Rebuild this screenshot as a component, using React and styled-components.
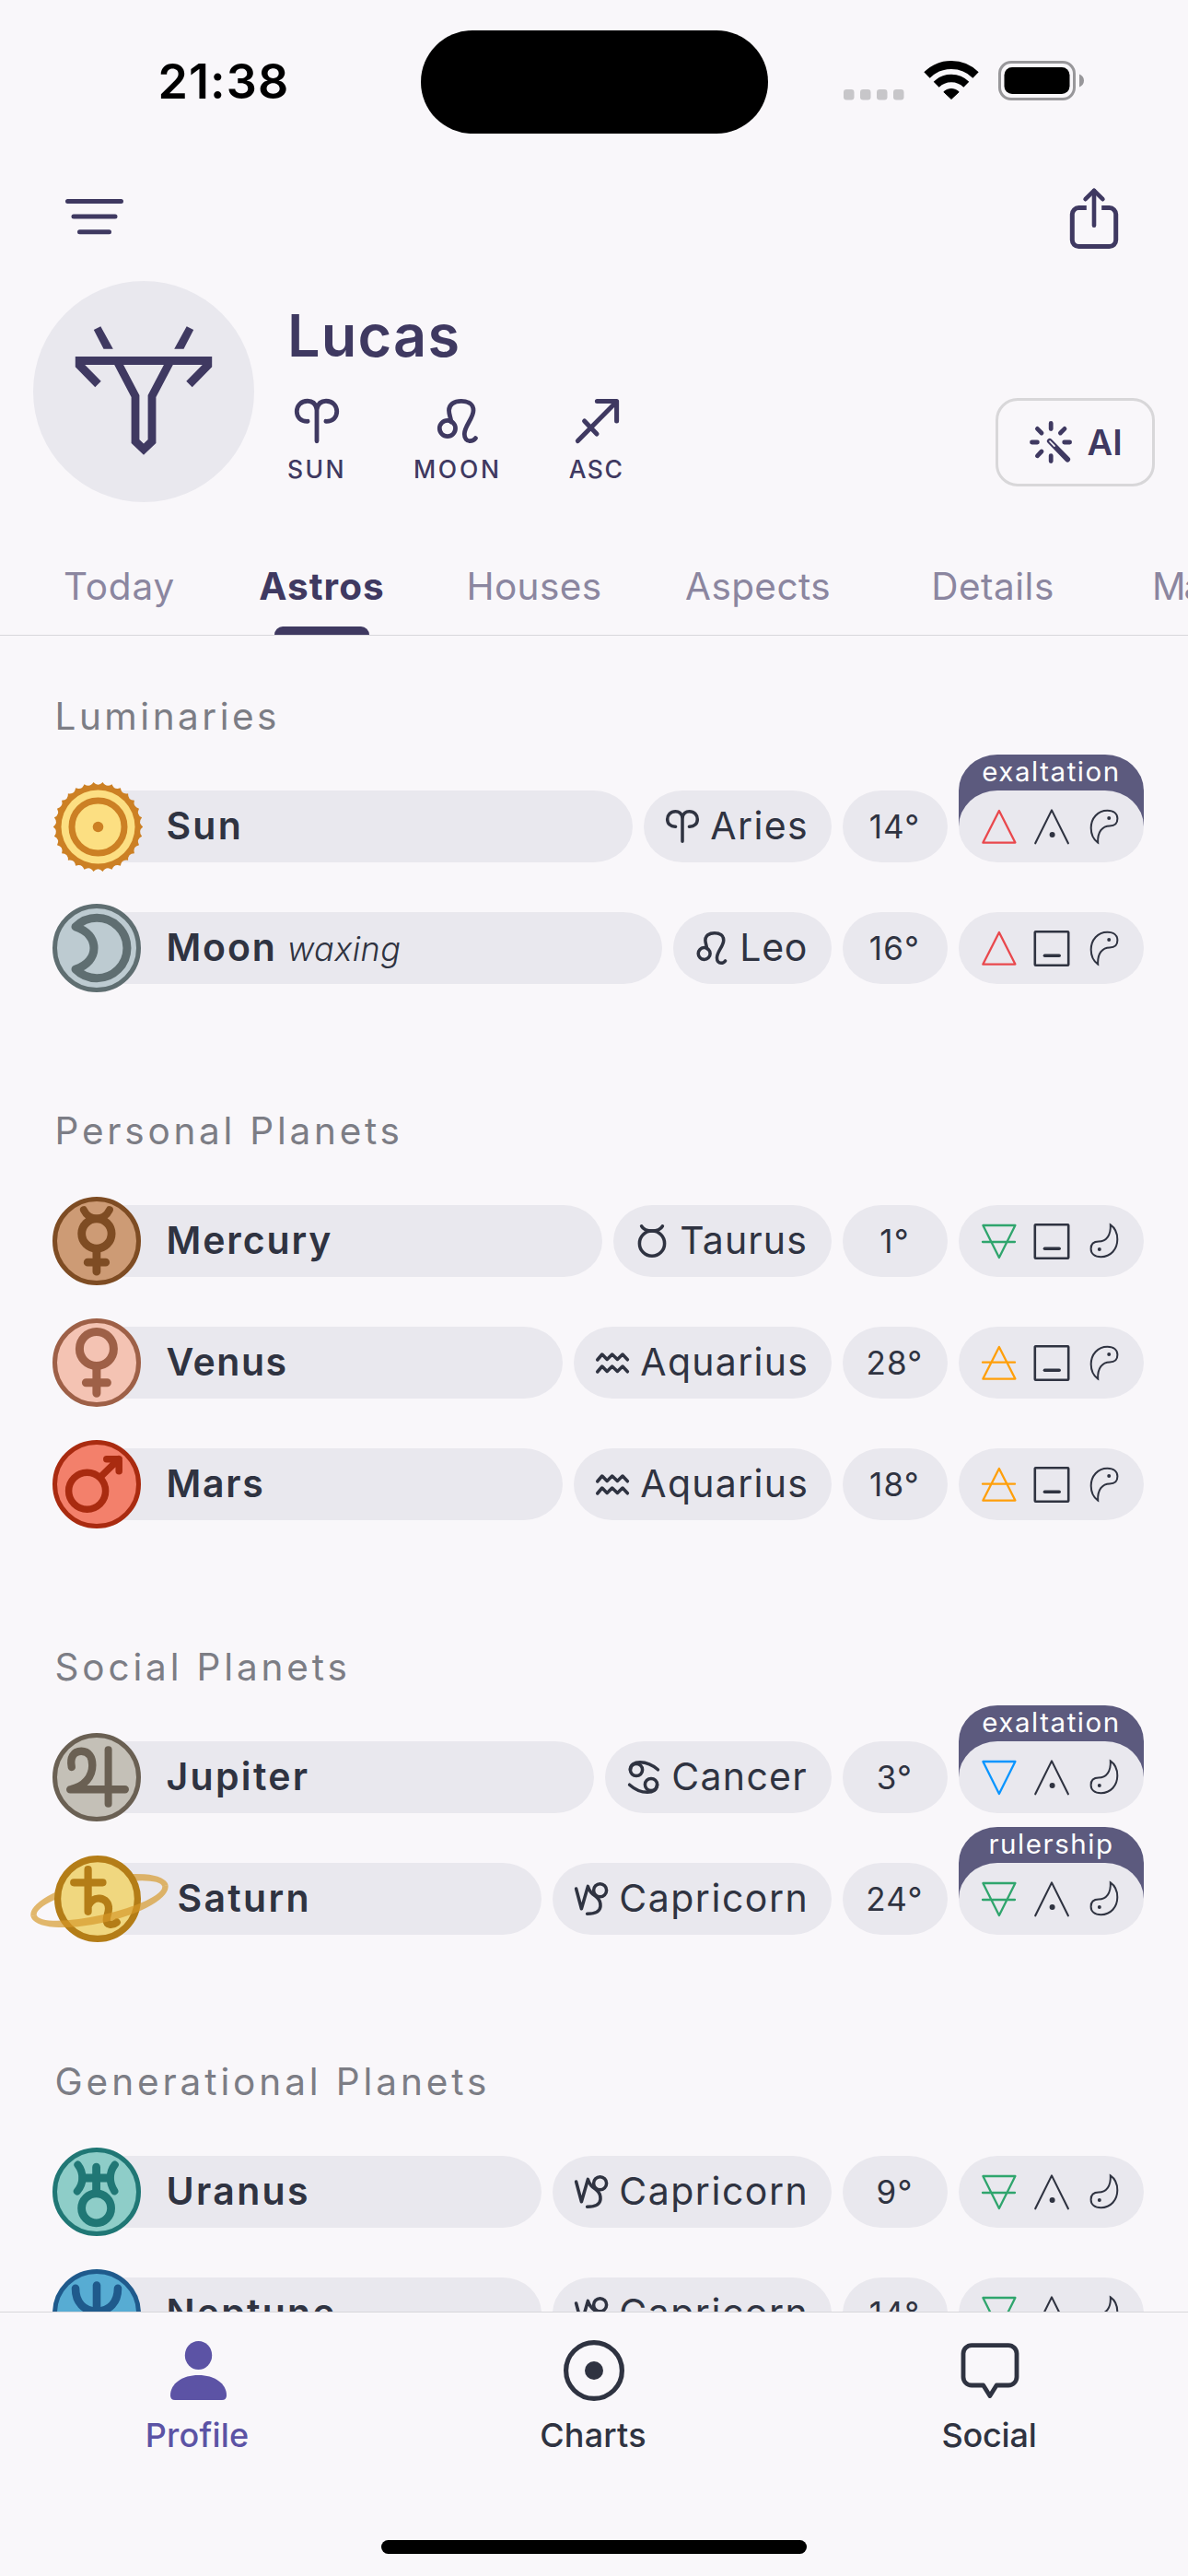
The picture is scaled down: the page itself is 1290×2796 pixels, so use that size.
import React from 'react';
import styled, { createGlobalStyle } from 'styled-components';

const color = {
  page: '#f9f7fa',
  pill: '#e9e8ee',
  brand: '#3f3961',
  ink: '#2f3341',
  muted: '#8b86a0',
  heading: '#7c7d85',
  line: '#d8d7db',
  badge: '#5c5a7e',
  active: '#5c53a5',
};

const GlobalStyle = createGlobalStyle`
  * { box-sizing: border-box; }
  html, body { margin: 0; padding: 0; background: ${color.page}; }
  body { font-family: Inter, "Liberation Sans", sans-serif; }
  svg { display: block; flex: none; overflow: visible; }
`;

const Screen = styled.div`
  width: 1290px;
  height: 2796px;
  display: flex;
  flex-direction: column;
  overflow: hidden;
  background: ${color.page};
  color: ${color.ink};
`;

/* ---------- status bar ---------- */

const StatusBar = styled.div`
  flex: none;
  height: 145px;
  padding-top: 33px;
  display: grid;
  grid-template-columns: 456.5px 377px 1fr;
  align-items: center;
`;

const Clock = styled.div`
  padding-left: 171.5px;
  font-size: 52px;
  font-weight: 600;
  letter-spacing: 1.1px;
  line-height: 60px;
  color: #000;
`;

const Island = styled.div`
  height: 112px;
  border-radius: 56px;
  background: #000;
`;

const StatusIcons = styled.div`
  display: flex;
  align-items: center;
  padding-left: 82.5px;
  padding-bottom: 4px;
`;

const WifiSlot = styled.div`
  margin: 0 22.5px 0 21.5px;
`;

function StatusBarRow() {
  return (
    <StatusBar>
      <Clock>21:38</Clock>
      <Island />
      <StatusIcons>
        <svg width="66" height="43" viewBox="0 0 66 43" fill="#c7c6c9">
          {[0, 18, 36, 54].map((x) => (
            <rect key={x} x={x} y="31" width="11.5" height="11.5" rx="3.2" />
          ))}
        </svg>
        <WifiSlot>
          <svg width="58" height="43" viewBox="0 0 58 43" fill="none" stroke="#000">
            <path d="M2.5 15.5A37.5 37.5 0 0 1 55.5 15.5" strokeWidth="9" />
            <path d="M12.7 25.7A23 23 0 0 1 45.3 25.7" strokeWidth="8.4" />
            <path d="M29 41.5L20.8 33.8A11.8 11.8 0 0 1 37.2 33.8Z" fill="#000" strokeWidth="1" strokeLinejoin="round" />
          </svg>
        </WifiSlot>
        <svg width="94" height="43" viewBox="0 0 94 43">
          <rect x="1.5" y="1.5" width="81" height="40" rx="12.5" fill="none" stroke="#98979a" strokeWidth="3" />
          <rect x="6.5" y="7" width="71" height="29" rx="8.5" fill="#000" />
          <path d="M88 14.5C91.2 15.8 93 18.4 93 21.5C93 24.6 91.2 27.2 88 28.5Z" fill="#98979a" />
        </svg>
      </StatusIcons>
    </StatusBar>
  );
}

/* ---------- toolbar ---------- */

const Toolbar = styled.div`
  flex: none;
  height: 160px;
  padding: 20px 75px 0 71px;
  display: flex;
  align-items: center;
  justify-content: space-between;
`;

function ToolbarRow() {
  return (
    <Toolbar>
      <svg width="63" height="38" viewBox="0 0 63 38" stroke={color.brand} strokeWidth="5" strokeLinecap="round">
        <path d="M2.5 2.4H60.5M9 19.1H54M15.5 35.8H47.5" />
      </svg>
      <svg width="54" height="76" viewBox="0 0 54 76" fill="none" stroke={color.brand} strokeWidth="5" strokeLinecap="round" strokeLinejoin="round">
        <path d="M18.8 28.6H10.3a7 7 0 0 0-7 7V63.6a7 7 0 0 0 7 7H43.7a7 7 0 0 0 7-7V35.6a7 7 0 0 0-7-7H35.2" strokeLinecap="butt" />
        <path d="M27 10V47.8" strokeWidth="4.6" />
        <path d="M17.6 19.2L27 9.8L36.4 19.2" strokeWidth="4.6" />
      </svg>
    </Toolbar>
  );
}

/* ---------- sign glyphs ---------- */

const signs = {
  aries: {
    box: 36,
    art: (
      <>
        <path d="M18 34.3V8C17 3.8 14 1.7 10.5 1.7C5 1.7 1.7 5.5 1.7 10.2C1.7 15 5 18.4 10.6 18.2" />
        <path d="M18 8C19 3.8 22 1.7 25.5 1.7C31 1.7 34.3 5.5 34.3 10.2C34.3 15 31 18.4 25.4 18.2" />
      </>
    ),
  },
  leo: {
    box: 48,
    art: (
      <>
        <circle cx="12.9" cy="32" r="8.6" />
        <path d="M17 25C16 19.5 14.5 16 14.5 12.5C14.5 6 20 2.3 27.8 2.3C35.8 2.3 41 6 41 12.5C41 21 31.3 29.5 31.3 38C31.3 43 34 45.7 37.3 45.7C40.3 45.7 42 44.6 43.4 42.6" />
      </>
    ),
  },
  sagittarius: {
    box: 48,
    art: <path d="M3.4 45.6L45 3.4M24.4 2.6H45.6V24M10.6 24L24 38" />,
  },
  taurus: {
    box: 36,
    art: (
      <>
        <circle cx="18" cy="20.7" r="13.6" />
        <path d="M6.6 1.9C8.5 5.4 13 7.1 18 7.1C23 7.1 27.5 5.4 29.4 1.9" />
      </>
    ),
  },
  aquarius: {
    box: 36,
    art: (
      <>
        <path d="M1.7 15L6.8 9L12.2 14.5L17.7 9L23.4 14.5L29 9L34.4 14.8" />
        <path d="M1.7 28L6.8 22L12.2 27.5L17.7 22L23.4 27.5L29 22L34.4 27.8" />
      </>
    ),
  },
  cancer: {
    box: 36,
    art: (
      <>
        <circle cx="10" cy="10" r="6.6" />
        <circle cx="26" cy="26" r="6.6" />
        <path d="M3.4 10C3.4 4.3 8 1.7 14 1.7C22 1.7 28 5 33.4 9.8" />
        <path d="M32.6 26C32.6 31.7 28 34.3 22 34.3C14 34.3 8 31 2.6 26.2" />
      </>
    ),
  },
  capricorn: {
    box: 36,
    art: (
      <>
        <circle cx="27.6" cy="8.7" r="7" />
        <path d="M1.6 7L7.4 28.8L14.4 4.4C16.5 11.5 20 13.5 23.4 15.8C27.2 18.6 28.2 22 28 26C27.6 32 23 34.3 13.6 34.3" />
      </>
    ),
  },
};

function SignGlyph({ name, size = 36, weight = 0.098 }) {
  const { box, art } = signs[name];
  return (
    <svg width={size} height={size} viewBox={`0 0 ${box} ${box}`} fill="none" stroke="currentColor" strokeWidth={box * weight} strokeLinecap="round" strokeLinejoin="round">
      {art}
    </svg>
  );
}

/* ---------- profile header ---------- */

const ProfileHeader = styled.header`
  flex: none;
  height: 240px;
  padding: 0 36px;
  display: flex;
  align-items: flex-start;
  color: ${color.brand};
`;

const Avatar = styled.div`
  width: 240px;
  height: 240px;
  border-radius: 50%;
  background: ${color.pill};
`;

const Identity = styled.div`
  margin-left: 36px;
  padding-top: 19px;
  display: flex;
  flex-direction: column;
`;

const ProfileName = styled.h1`
  margin: 0;
  font-size: 63px;
  font-weight: 600;
  line-height: 80px;
  letter-spacing: 1.2px;
`;

const BigThree = styled.div`
  margin-top: 29px;
  display: flex;
  gap: 73px;
`;

const Placement = styled.div`
  display: flex;
  flex-direction: column;
  align-items: center;
  gap: 12px;
`;

const PlacementLabel = styled.span`
  font-size: 26.5px;
  font-weight: 500;
  line-height: 32px;
  letter-spacing: ${(p) => p.$track}px;
`;

const AiButton = styled.button`
  margin: 127px 0 0 auto;
  width: 173px;
  height: 96px;
  padding: 0 0 0 33.5px;
  display: flex;
  align-items: center;
  gap: 17px;
  border: 3px solid #d8d7d9;
  border-radius: 24px;
  background: transparent;
  color: ${color.brand};
  font-family: inherit;
  font-size: 38px;
  font-weight: 600;
  line-height: 48px;
`;

function Header() {
  return (
    <ProfileHeader>
      <Avatar>
        <svg width="240" height="240" viewBox="36 305 240 240" fill="none" stroke={color.brand} strokeWidth="9">
          <path d="M106.5 417L86.3 396.3V391.5H225.7V396.3L205.5 417" />
          <path d="M126.5 391L147 430V479L156 487.6L165 479V430L185.5 391" strokeWidth="8.8" />
          <path d="M101.8 358L109.3 354.2L122.8 378.7H112.5ZM210.2 358L202.7 354.2L189.2 378.7H199.5Z" fill={color.brand} stroke="none" />
        </svg>
      </Avatar>
      <Identity>
        <ProfileName>Lucas</ProfileName>
        <BigThree>
          <Placement>
            <SignGlyph name="aries" size={48} weight={0.1} />
            <PlacementLabel $track={2.4}>SUN</PlacementLabel>
          </Placement>
          <Placement>
            <SignGlyph name="leo" size={48} weight={0.1} />
            <PlacementLabel $track={2.7}>MOON</PlacementLabel>
          </Placement>
          <Placement>
            <SignGlyph name="sagittarius" size={48} weight={0.105} />
            <PlacementLabel $track={1.5}>ASC</PlacementLabel>
          </Placement>
        </BigThree>
      </Identity>
      <AiButton>
        <svg width="46" height="46" viewBox="0 0 46 46" fill="none" stroke={color.brand} strokeWidth="4.8" strokeLinecap="round">
          <path d="M23.2 2.5V8.6M23.2 37.6V43.6M2.5 23H8.4M37.7 23H43.6M8.4 8.4L13 13M38 8.4L33.4 13M8.4 37.8L13 33" />
          <path d="M21.8 21.8L41.2 41.6" strokeWidth="5.8" />
          <path d="M22 22L27 27.2" stroke={color.page} strokeWidth="1.7" />
        </svg>
        AI
      </AiButton>
    </ProfileHeader>
  );
}

/* ---------- tabs ---------- */

const TabBar = styled.nav`
  flex: none;
  height: 145px;
  padding-left: 24px;
  display: flex;
  overflow: hidden;
  border-bottom: 1px solid ${color.line};
`;

const Tab = styled.div`
  flex: none;
  position: relative;
  width: ${(p) => p.$width}px;
  padding-top: 67px;
  text-align: ${(p) => p.$align || 'center'};
  padding-left: ${(p) => (p.$align ? 45 : 0)}px;
  font-size: 40.5px;
  font-weight: ${(p) => (p.$active ? 700 : 400)};
  line-height: 50px;
  letter-spacing: ${(p) => p.$track}px;
  white-space: nowrap;
  color: ${(p) => (p.$active ? color.brand : color.muted)};
`;

const TabIndicator = styled.span`
  position: absolute;
  left: 50%;
  bottom: 0;
  width: 103px;
  height: 9px;
  margin-left: -51.5px;
  border-radius: 9px 9px 0 0;
  background: ${color.brand};
`;

const tabs = [
  { label: 'Today', width: 211, track: 0.8 },
  { label: 'Astros', width: 229, track: 1, active: true },
  { label: 'Houses', width: 232, track: 0.4 },
  { label: 'Aspects', width: 254, track: 0.4 },
  { label: 'Details', width: 256, track: 0.5 },
  { label: 'Maps', width: 200, track: -2, align: 'left' },
];

/* ---------- astro list ---------- */

const List = styled.main`
  flex: 1;
  min-height: 0;
  overflow: hidden;
  padding: 63px 48px 0 57px;
`;

const Section = styled.section`
  margin-bottom: 135px;
`;

const SectionTitle = styled.h2`
  margin: 0 0 55px 2.5px;
  font-size: 40.5px;
  font-weight: 400;
  line-height: 50px;
  letter-spacing: ${(p) => p.$track}px;
  color: ${color.heading};
`;

const Rows = styled.div`
  display: flex;
  flex-direction: column;
  gap: 54px;
`;

const Row = styled.div`
  display: flex;
  gap: 12px;
  height: 78px;
`;

const Planet = styled.div`
  z-index: 1;
  flex: none;
  width: 96px;
  height: 96px;
  margin: -9px -60px -9px 0;
`;

const Pill = styled.div`
  display: flex;
  align-items: center;
  height: 78px;
  border-radius: 42px / 39px;
  background: ${color.pill};
`;

const NamePill = styled(Pill)`
  flex: 1;
  align-items: baseline;
  padding: 13px 0 0 ${(p) => (p.$ringed ? 87.5 : 75.5)}px;
  border-radius: 0 42px 42px 0 / 0 39px 39px 0;
  line-height: 50px;
`;

const PlanetName = styled.span`
  font-size: 41px;
  font-weight: 600;
  letter-spacing: ${(p) => p.$track}px;
`;

const Phase = styled.span`
  margin-left: 11.5px;
  font-size: 36px;
  font-style: italic;
  font-weight: 300;
  letter-spacing: 0.4px;
`;

const SignPill = styled(Pill)`
  width: ${(p) => p.$width}px;
  padding-left: 24px;
  gap: 12.3px;
`;

const SignName = styled.span`
  padding-bottom: 2px;
  font-size: 41px;
  line-height: 50px;
  letter-spacing: ${(p) => p.$track}px;
`;

const DegreePill = styled(Pill)`
  width: 114px;
  justify-content: center;
  padding-right: 1px;
  font-size: 35px;
  line-height: 44px;
  letter-spacing: 1.2px;
`;

const QualitySlot = styled.div`
  position: relative;
  width: 201px;
`;

const QualityPill = styled(Pill)`
  position: relative;
  padding: 0 24.5px;
  gap: 19px;
`;

const DignityBadge = styled.div`
  position: absolute;
  left: 0;
  right: 0;
  top: -39px;
  height: 78px;
  border-radius: 42px 42px 0 0 / 39px 39px 0 0;
  background: ${color.badge};
  color: #fff;
  font-size: 29.5px;
  line-height: 37px;
  letter-spacing: 1.55px;
  text-align: center;
`;

/* ---------- element, modality and polarity marks ---------- */

const elements = {
  fire: { stroke: '#e9484d', d: 'M1.4 36.6H36.4L18.9 2Z' },
  earth: { stroke: '#2fa56d', d: 'M1.4 2H36.4L18.9 37ZM1 20H36' },
  air: { stroke: '#ff9f0a', d: 'M1.4 36.6H36.4L18.9 2ZM1 18.7H36' },
  water: { stroke: '#0a95ff', d: 'M1.4 2H36.4L18.9 37Z' },
};

function ElementMark({ kind }) {
  const { stroke, d } = elements[kind];
  return (
    <svg width="38" height="38" viewBox="0 0 38 38" fill="none" stroke={stroke} strokeWidth="2.3" strokeLinecap="round" strokeLinejoin="round">
      <path d={d} />
    </svg>
  );
}

function ModalityMark({ fixed }) {
  return (
    <svg width="38" height="38" viewBox="0 0 38 38" fill="none" stroke={color.ink} strokeLinecap="round" strokeLinejoin="round">
      {fixed ? (
        <>
          <rect x="0.8" y="1.3" width="36.4" height="36.4" rx="0.8" strokeWidth="2.6" />
          <path d="M11.4 27.2H27.2" strokeWidth="3.5" />
        </>
      ) : (
        <>
          <path d="M1.2 37.3L19 1.4L36.9 37.3" strokeWidth="2.1" />
          <circle cx="19.6" cy="28" r="3" fill={color.ink} stroke="none" />
        </>
      )}
    </svg>
  );
}

function PolarityMark({ yin }) {
  return (
    <svg width="38" height="38" viewBox="0 0 38 38" fill="none" stroke={color.ink} strokeWidth="2">
      <g transform={yin ? 'rotate(180 19 19)' : undefined}>
        <path d="M12.2 36.6C7 33 4.7 27.3 4.7 20.8C4.7 10 12 1.8 22.5 1.8C29.6 1.8 33.4 5.5 33.4 10.5C33.4 15.6 30.5 18.4 25 18.4C17 18.4 11.5 25 12.2 36.6Z" />
        <circle cx="24.2" cy="10" r="2" fill={color.ink} stroke="none" />
      </g>
    </svg>
  );
}

/* ---------- planet medallions ---------- */

function sunEdge(cx, cy) {
  const at = (deg, r) => {
    const a = (deg * Math.PI) / 180;
    return `${(cx + r * Math.cos(a)).toFixed(2)} ${(cy + r * Math.sin(a)).toFixed(2)}`;
  };
  let d = `M${at(180, 48.7)}`;
  for (let i = 0; i < 30; i += 1) {
    d += `Q${at(186 + i * 12, 43.2)} ${at(192 + i * 12, 48.7)}`;
  }
  return `${d}Z`;
}

function Disc({ fill, stroke, children, width = 8.7 }) {
  return (
    <svg width="96" height="96" viewBox="0 0 96 96" fill="none" stroke={stroke} strokeWidth={width} strokeLinecap="round" strokeLinejoin="round">
      <circle cx="48" cy="48" r="45.5" fill={fill} strokeWidth="5" />
      {children}
    </svg>
  );
}

const planetArt = {
  Sun: (
    <svg width="96" height="96" viewBox="0 0 96 96" fill="none" stroke="#cc8024">
      <path d={sunEdge(49.5, 48.5)} fill="#cc8024" stroke="none" />
      <circle cx="49.5" cy="48.5" r="40" fill="#fcdf82" stroke="none" />
      <circle cx="49.5" cy="48.5" r="28.5" strokeWidth="7" />
      <circle cx="49.5" cy="48.5" r="5.8" fill="#cc8024" stroke="none" />
    </svg>
  ),
  Moon: (
    <Disc fill="#bdcbd1" stroke="#5f6e71" width={9}>
      <path d="M25 25A32.7 32.7 0 1 1 25 71C38 67 45 58 45 48C45 38 38 29 25 25Z" />
    </Disc>
  ),
  Mercury: (
    <Disc fill="#cd9b75" stroke="#7e4c23" width={8.8}>
      <circle cx="47.9" cy="40" r="16.2" />
      <path d="M33.9 14.2C37 20.5 41.5 23.4 47.9 23.4C54.3 23.4 58.8 20.5 61.9 14.2" strokeWidth="8" />
      <path d="M47.9 57V81.2M38.2 71.2H57.7" />
    </Disc>
  ),
  Venus: (
    <Disc fill="#f4c3b3" stroke="#9e6047" width={9}>
      <circle cx="47.9" cy="33" r="18.5" />
      <path d="M47.9 52V81.2M36.4 69.7H59.4" />
    </Disc>
  ),
  Mars: (
    <Disc fill="#f3806b" stroke="#a92b10" width={7.5}>
      <circle cx="37.6" cy="55.2" r="20" />
      <path d="M52.8 39.4L72 20.8M58.8 20.7H72.2V33.8" />
    </Disc>
  ),
  Jupiter: (
    <Disc fill="#c4c0b7" stroke="#6a6053" width={8.4}>
      <path d="M20.8 37C18.8 27 22.5 19.8 31.3 19.8C39.5 19.8 43.3 26.5 43.3 35C43.3 47 35 58.5 19.2 61.3H78.8" />
      <path d="M60.6 18.3V76.7" strokeWidth="8" />
    </Disc>
  ),
  Saturn: (
    <svg width="96" height="96" viewBox="0 0 96 96" fill="none" stroke="#b47d17" strokeWidth="8.2" strokeLinecap="round">
      <g transform="translate(51 50) rotate(-12.8)" fill="#d69828" fillOpacity="0.68" stroke="none">
        <path d="M-76.4 0A76.4 24.2 0 0 1 76.4 0H69.9A69.9 15.7 0 0 0 -69.9 0Z" />
      </g>
      <circle cx="49" cy="48" r="43.4" fill="#f0d77f" strokeWidth="7.2" />
      <path d="M38.6 16.2V61.8M23.2 30.3H54.5M38.8 55.5C42 49.5 46.5 47 51.5 47.6C57.5 48.4 61 52.5 61 58.5C61 63.5 58.7 66.5 58.7 71C58.7 76.6 64.5 77.5 69.8 73.4" />
      <g transform="translate(51 50) rotate(-12.8)" fill="#d69828" fillOpacity="0.68" stroke="none">
        <path d="M-76.4 0A76.4 24.2 0 0 0 76.4 0H69.9A69.9 15.7 0 0 1 -69.9 0Z" />
      </g>
    </svg>
  ),
  Uranus: (
    <Disc fill="#8ecdc8" stroke="#207775" width={8.8}>
      <circle cx="47.6" cy="65.8" r="16" />
      <path d="M47.6 21.2V49M33 33H62" />
      <path d="M27.5 18.6C31 23 32.4 28 32.4 33C32.4 38 30.6 43 26.9 47.3M67.7 18.6C64.2 23 62.8 28 62.8 33C62.8 38 64.6 43 67.3 47.3" strokeWidth="8.2" />
    </Disc>
  ),
  Neptune: (
    <Disc fill="#57acd3" stroke="#1f5a8c" width={8.6}>
      <path d="M25 20.8C25 36 34 45.5 48 45.5C62 45.5 71 36 71 20.8M48 17.6V82M37 66H59" />
    </Disc>
  ),
};

const sections = [
  {
    title: 'Luminaries',
    track: 3.5,
    rows: [
      { name: 'Sun', track: 2.2, sign: 'Aries', signTrack: 1.4, width: 204, degree: 14, element: 'fire', badge: 'exaltation' },
      { name: 'Moon', track: 1.8, phase: 'waxing', sign: 'Leo', signTrack: 0.7, width: 172, degree: 16, element: 'fire', fixed: true },
    ],
  },
  {
    title: 'Personal Planets',
    track: 3.75,
    rows: [
      { name: 'Mercury', track: 1.9, sign: 'Taurus', signTrack: 1.1, width: 237, degree: 1, element: 'earth', fixed: true, yin: true },
      { name: 'Venus', track: 1.53, sign: 'Aquarius', signTrack: 1.3, width: 280, degree: 28, element: 'air', fixed: true },
      { name: 'Mars', track: 1.7, sign: 'Aquarius', signTrack: 1.3, width: 280, degree: 18, element: 'air', fixed: true },
    ],
  },
  {
    title: 'Social Planets',
    track: 3.85,
    rows: [
      { name: 'Jupiter', track: 2.3, sign: 'Cancer', signTrack: 1.3, width: 246, degree: 3, element: 'water', yin: true, badge: 'exaltation' },
      { name: 'Saturn', track: 2.3, ringed: true, sign: 'Capricorn', signTrack: 1.5, width: 303, degree: 24, element: 'earth', yin: true, badge: 'rulership' },
    ],
  },
  {
    title: 'Generational Planets',
    track: 3.9,
    rows: [
      { name: 'Uranus', track: 2.35, sign: 'Capricorn', signTrack: 1.5, width: 303, degree: 9, element: 'earth', yin: true },
      { name: 'Neptune', track: 2.2, sign: 'Capricorn', signTrack: 1.5, width: 303, degree: 14, element: 'earth', yin: true },
    ],
  },
];

function AstroRow({ item }) {
  return (
    <Row>
      <Planet>{planetArt[item.name]}</Planet>
      <NamePill $ringed={item.ringed}>
        <PlanetName $track={item.track}>{item.name}</PlanetName>
        {item.phase && <Phase>{item.phase}</Phase>}
      </NamePill>
      <SignPill $width={item.width}>
        <SignGlyph name={item.sign.toLowerCase()} />
        <SignName $track={item.signTrack}>{item.sign}</SignName>
      </SignPill>
      <DegreePill>{item.degree}°</DegreePill>
      <QualitySlot>
        {item.badge && <DignityBadge>{item.badge}</DignityBadge>}
        <QualityPill>
          <ElementMark kind={item.element} />
          <ModalityMark fixed={item.fixed} />
          <PolarityMark yin={item.yin} />
        </QualityPill>
      </QualitySlot>
    </Row>
  );
}

/* ---------- bottom navigation ---------- */

const BottomBar = styled.footer`
  flex: none;
  height: 287px;
  border-top: 1px solid ${color.line};
  background: ${color.page};
`;

const NavItems = styled.div`
  display: grid;
  grid-template-columns: repeat(3, 1fr);
  padding-top: 29px;
`;

const NavItem = styled.div`
  display: flex;
  flex-direction: column;
  align-items: center;
  gap: 14px;
  color: ${(p) => (p.$active ? color.active : color.ink)};
`;

const NavLabel = styled.span`
  padding-right: 2px;
  font-size: 36px;
  font-weight: 500;
  line-height: 44px;
  letter-spacing: ${(p) => p.$track}px;
`;

const HomeIndicator = styled.div`
  width: 462px;
  height: 15px;
  margin: 92px auto 0;
  border-radius: 8px;
  background: #000;
`;

export default function App() {
  return (
    <>
      <GlobalStyle />
      <Screen>
        <StatusBarRow />
        <ToolbarRow />
        <Header />
        <TabBar>
          {tabs.map((t) => (
            <Tab key={t.label} $width={t.width} $track={t.track} $active={t.active} $align={t.align}>
              {t.label}
              {t.active && <TabIndicator />}
            </Tab>
          ))}
        </TabBar>
        <List>
          {sections.map((s) => (
            <Section key={s.title}>
              <SectionTitle $track={s.track}>{s.title}</SectionTitle>
              <Rows>
                {s.rows.map((item) => (
                  <AstroRow key={item.name} item={item} />
                ))}
              </Rows>
            </Section>
          ))}
        </List>
        <BottomBar>
          <NavItems>
            <NavItem $active>
              <svg width="68" height="68" viewBox="0 0 68 68" fill={color.active}>
                <ellipse cx="34.5" cy="17.5" rx="14.7" ry="15.4" />
                <path d="M4 61C4 48 17 39 34.5 39C52 39 65 48 65 61Q65 66 60 66H9Q4 66 4 61Z" />
              </svg>
              <NavLabel $track={0.2}>Profile</NavLabel>
            </NavItem>
            <NavItem>
              <svg width="68" height="68" viewBox="0 0 68 68" fill="none" stroke={color.ink} strokeWidth="5.2">
                <circle cx="34" cy="34" r="30.4" />
                <circle cx="34" cy="34" r="10" fill={color.ink} stroke="none" />
              </svg>
              <NavLabel $track={0.2}>Charts</NavLabel>
            </NavItem>
            <NavItem>
              <svg width="68" height="68" viewBox="0 0 68 68" fill="none" stroke={color.ink} strokeWidth="4.8" strokeLinejoin="round">
                <path d="M14 6.6H54a9 9 0 0 1 9 9V41a9 9 0 0 1-9 9H41.1L33.9 61.6L26.7 50H14a9 9 0 0 1-9-9V15.6a9 9 0 0 1 9-9Z" />
              </svg>
              <NavLabel $track={-0.2}>Social</NavLabel>
            </NavItem>
          </NavItems>
          <HomeIndicator />
        </BottomBar>
      </Screen>
    </>
  );
}
